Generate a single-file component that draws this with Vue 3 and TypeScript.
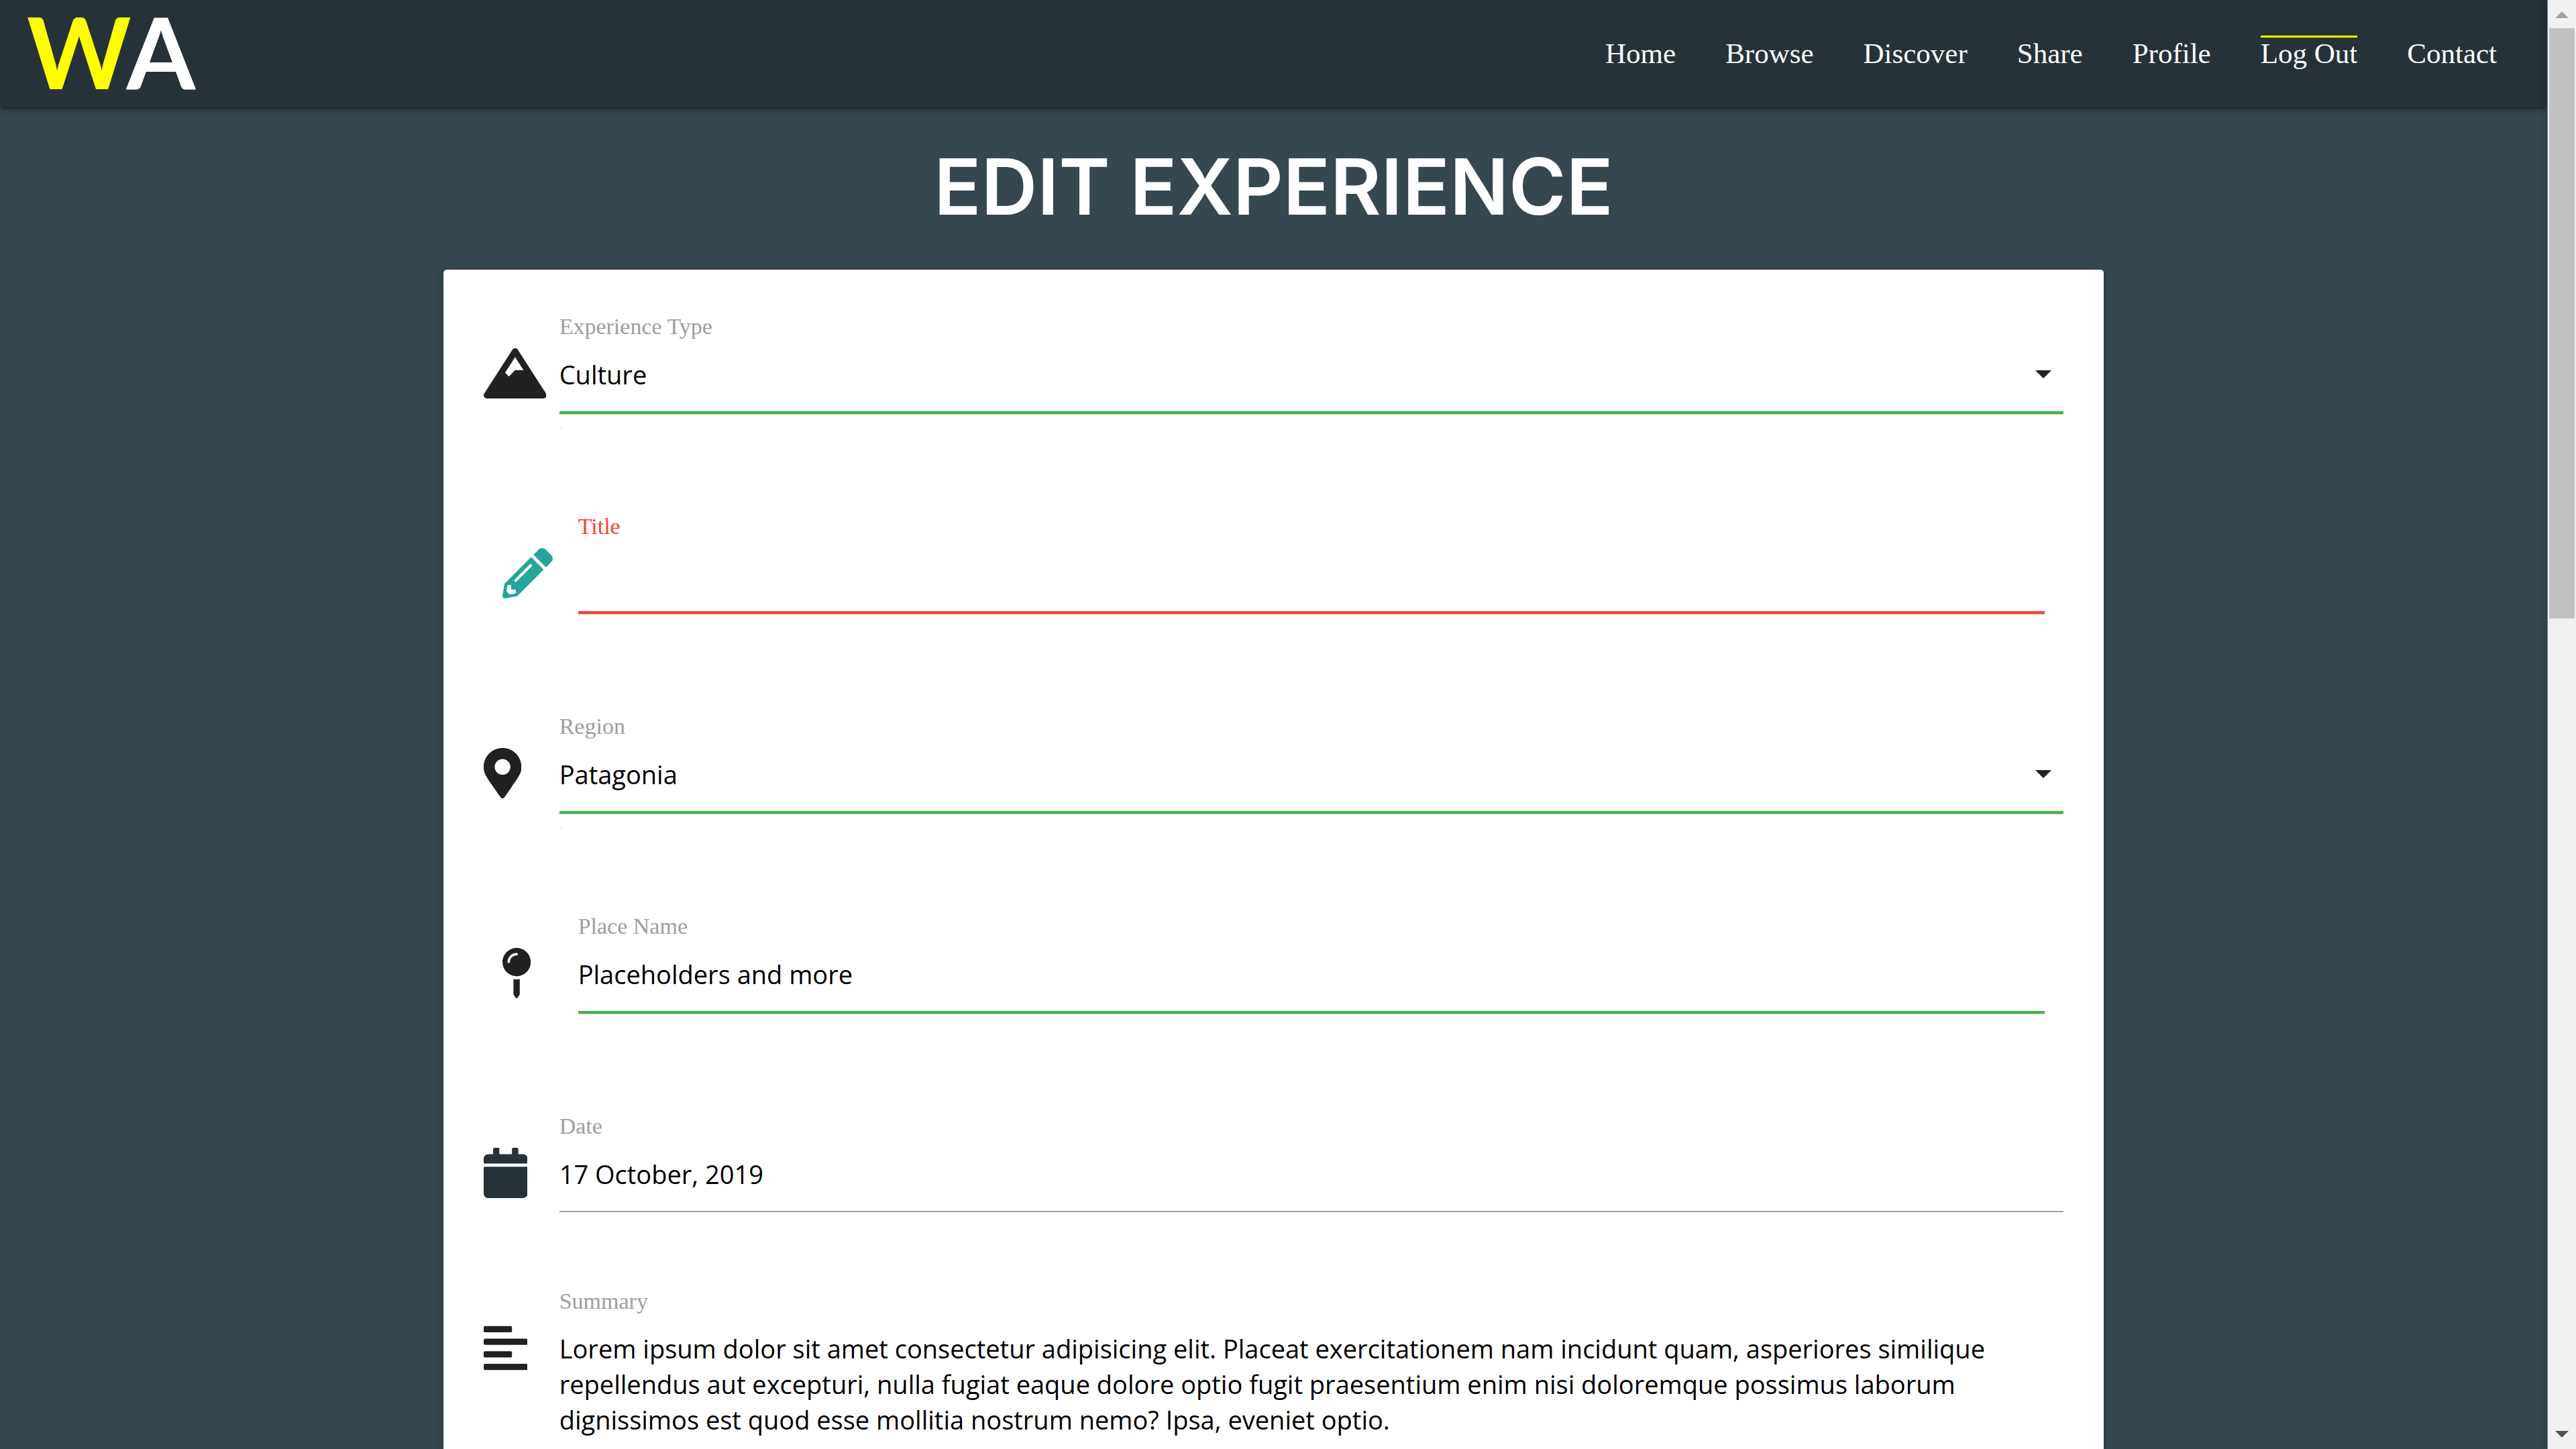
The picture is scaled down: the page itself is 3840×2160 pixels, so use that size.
<script setup lang="ts">
import { ref } from 'vue'

interface NavItem {
  label: string
  active?: boolean
}

type FieldKind = 'select' | 'text' | 'textarea'

interface Field {
  id: string
  label: string
  kind: FieldKind
  state: 'valid' | 'invalid' | 'plain'
  inset?: boolean
  tone?: 'teal' | 'slate'
  iconWidth: number
  icon: string
  options?: string[]
}

const nav: NavItem[] = [
  { label: 'Home' },
  { label: 'Browse' },
  { label: 'Discover' },
  { label: 'Share' },
  { label: 'Profile' },
  { label: 'Log Out', active: true },
  { label: 'Contact' },
]

const fields: Field[] = [
  {
    id: 'type',
    label: 'Experience Type',
    kind: 'select',
    state: 'valid',
    options: ['Culture'],
    iconWidth: 640,
    icon: 'M634.92 462.7l-288-448C341.03 5.54 330.89 0 320 0s-21.03 5.54-26.92 14.7l-288 448a32.001 32.001 0 0 0-1.17 32.64A32.004 32.004 0 0 0 32 512h576c11.71 0 22.48-6.39 28.09-16.67a31.983 31.983 0 0 0-1.17-32.63zM320 91.18L405.39 224H320l-64 64-38.06-38.06L320 91.18z',
  },
  {
    id: 'title',
    label: 'Title',
    kind: 'text',
    state: 'invalid',
    inset: true,
    tone: 'teal',
    iconWidth: 512,
    icon: 'M497.9 142.1l-46.1 46.1c-4.7 4.7-12.3 4.7-17 0l-111-111c-4.7-4.7-4.7-12.3 0-17l46.1-46.1c18.7-18.7 49.1-18.7 67.9 0l60.1 60.1c18.8 18.7 18.8 49.1 0 67.9zM284.2 99.8L21.6 362.4.4 483.9c-2.9 16.4 11.4 30.6 27.8 27.8l121.5-21.3 262.6-262.6c4.7-4.7 4.7-12.3 0-17l-111-111c-4.8-4.7-12.4-4.7-17.1 0zM124.1 339.9c-5.5-5.5-5.5-14.3 0-19.8l154-154c5.5-5.5 14.3-5.5 19.8 0s5.5 14.3 0 19.8l-154 154c-5.5 5.5-14.3 5.5-19.8 0zM88 424h48v36.3l-64.5 11.3-31.1-31.1L51.7 376H88v48z',
  },
  {
    id: 'region',
    label: 'Region',
    kind: 'select',
    state: 'valid',
    options: ['Patagonia'],
    iconWidth: 384,
    icon: 'M172.268 501.67C26.97 291.031 0 269.413 0 192 0 85.961 85.961 0 192 0s192 85.961 192 192c0 77.413-26.97 99.031-172.268 309.67-9.535 13.774-29.93 13.773-39.464 0zM192 272c44.183 0 80-35.817 80-80s-35.817-80-80-80-80 35.817-80 80 35.817 80 80 80z',
  },
  {
    id: 'place',
    label: 'Place Name',
    kind: 'text',
    state: 'valid',
    inset: true,
    iconWidth: 288,
    icon: 'M112 316.94v156.69l22.02 33.02c4.75 7.12 15.22 7.12 19.97 0L176 473.63V316.94c-10.39 1.92-21.06 3.06-32 3.06s-21.61-1.14-32-3.06zM144 0C64.47 0 0 64.47 0 144s64.47 144 144 144 144-64.47 144-144S223.53 0 144 0zm0 76c-37.5 0-68 30.5-68 68 0 6.62-5.38 12-12 12s-12-5.38-12-12c0-50.73 41.28-92 92-92 6.62 0 12 5.38 12 12s-5.38 12-12 12z',
  },
  {
    id: 'date',
    label: 'Date',
    kind: 'text',
    state: 'plain',
    tone: 'slate',
    iconWidth: 448,
    icon: 'M12 192h424c6.6 0 12 5.4 12 12v260c0 26.5-21.5 48-48 48H48c-26.5 0-48-21.5-48-48V204c0-6.6 5.4-12 12-12zm436-44v-36c0-26.5-21.5-48-48-48h-48V12c0-6.6-5.4-12-12-12h-40c-6.6 0-12 5.4-12 12v52H160V12c0-6.6-5.4-12-12-12h-40c-6.6 0-12 5.4-12 12v52H48C21.5 64 0 85.5 0 112v36c0 6.6 5.4 12 12 12h424c6.6 0 12-5.4 12-12z',
  },
  {
    id: 'summary',
    label: 'Summary',
    kind: 'textarea',
    state: 'plain',
    iconWidth: 448,
    icon: 'M12.83 352h262.34A12.82 12.82 0 0 0 288 339.17v-38.34A12.82 12.82 0 0 0 275.17 288H12.83A12.82 12.82 0 0 0 0 300.83v38.34A12.82 12.82 0 0 0 12.83 352zm0-256h262.34A12.82 12.82 0 0 0 288 83.17V44.83A12.82 12.82 0 0 0 275.17 32H12.83A12.82 12.82 0 0 0 0 44.83v38.34A12.82 12.82 0 0 0 12.83 96zM432 160H16a16 16 0 0 0-16 16v32a16 16 0 0 0 16 16h416a16 16 0 0 0 16-16v-32a16 16 0 0 0-16-16zm0 256H16a16 16 0 0 0-16 16v32a16 16 0 0 0 16 16h416a16 16 0 0 0 16-16v-32a16 16 0 0 0-16-16z',
  },
]

const values = ref<Record<string, string>>({
  type: 'Culture',
  title: '',
  region: 'Patagonia',
  place: 'Placeholders and more',
  date: '17 October, 2019',
  summary:
    'Lorem ipsum dolor sit amet consectetur adipisicing elit. Placeat exercitationem nam incidunt quam, asperiores similique repellendus aut excepturi, nulla fugiat eaque dolore optio fugit praesentium enim nisi doloremque possimus laborum dignissimos est quod esse mollitia nostrum nemo? Ipsa, eveniet optio.',
})
</script>

<template>
  <div class="window">
    <div class="page">
      <header class="topbar">
        <a href="#" class="logo"><span class="logo-w">W</span>A</a>
        <nav class="nav">
          <a
            v-for="item in nav"
            :key="item.label"
            href="#"
            class="nav-link"
            :class="{ active: item.active }"
          >{{ item.label }}</a>
        </nav>
      </header>

      <main>
        <h1 class="heading">EDIT EXPERIENCE</h1>
        <form class="card" @submit.prevent>
          <div
            v-for="field in fields"
            :key="field.id"
            class="field"
            :class="[field.state, field.kind, { inset: field.inset }]"
          >
            <div class="icon-cell">
              <svg
                class="icon"
                :class="field.tone"
                :viewBox="`0 0 ${field.iconWidth} 512`"
                aria-hidden="true"
              >
                <path :d="field.icon" />
              </svg>
            </div>
            <div class="body">
              <label class="label" :for="field.id">{{ field.label }}</label>
              <div v-if="field.kind === 'select'" class="select-box">
                <select :id="field.id" v-model="values[field.id]" class="control">
                  <option v-for="option in field.options" :key="option">{{ option }}</option>
                </select>
                <svg class="caret" viewBox="0 0 24 12" aria-hidden="true"><path d="M0 0h24L12 12z" /></svg>
                <span class="dot"></span>
              </div>
              <textarea
                v-else-if="field.kind === 'textarea'"
                :id="field.id"
                v-model="values[field.id]"
                class="area"
                rows="4"
                spellcheck="false"
              ></textarea>
              <input v-else :id="field.id" v-model="values[field.id]" class="control" type="text" />
            </div>
          </div>
        </form>
      </main>
    </div>

    <div class="scrollbar" aria-hidden="true">
      <svg class="arrow up" viewBox="0 0 42 42"><path d="M21 17l10 10H11z" /></svg>
      <div class="track"><div class="thumb"></div></div>
      <svg class="arrow down" viewBox="0 0 42 42"><path d="M21 25L11 15h20z" /></svg>
    </div>
  </div>
</template>

<style>
body {
  margin: 0;
  background: #37474f;
}
</style>

<style scoped>
*,
*::before {
  box-sizing: border-box;
}

.window {
  display: flex;
  height: 100vh;
  overflow: hidden;
  font-family: "Liberation Serif", serif;
}

.page {
  flex: 1;
  min-width: 0;
  overflow: hidden;
  background: #37474f;
}

.topbar {
  display: flex;
  align-items: flex-start;
  justify-content: space-between;
  height: 160px;
  padding: 0 75px 0 40px;
  background: #263238;
  box-shadow: 0 5px 5px 0 rgba(0, 0, 0, 0.14), 0 3px 12px 0 rgba(0, 0, 0, 0.12), 0 5px 3px -3px rgba(0, 0, 0, 0.3);
}

.logo {
  color: #fff;
  font-family: Lato, sans-serif;
  font-size: 148px;
  font-weight: 700;
  line-height: 152px;
  text-decoration: none;
}

.logo-w {
  color: #ff0;
}

.nav {
  display: flex;
  gap: 74px;
}

.nav-link {
  position: relative;
  color: #fff;
  font-size: 43px;
  line-height: 160px;
  text-decoration: none;
}

.nav-link.active::before {
  content: "";
  position: absolute;
  top: 53px;
  left: 0;
  width: 100%;
  height: 3px;
  background: #ff0;
}

.heading {
  margin: 0 0 6px;
  color: #fff;
  font-family: Inter, sans-serif;
  font-size: 116px;
  font-weight: 600;
  line-height: 236px;
  text-align: center;
}

.card {
  width: 65.2%;
  margin: 0 auto;
  padding: 65px 60px;
  border-radius: 5px;
  background: #fff;
  box-shadow: 0 5px 5px 0 rgba(0, 0, 0, 0.14), 0 8px 12px -5px rgba(0, 0, 0, 0.12), 0 3px 12px 0 rgba(0, 0, 0, 0.2);
}

.field {
  display: flex;
  margin-bottom: 150px;
}

.field.inset {
  padding: 0 28px;
}

.field.plain {
  margin-bottom: 113px;
}

.icon-cell {
  flex: none;
  width: 113px;
  padding-top: 52px;
}

.icon {
  display: block;
  height: 75px;
  fill: #212121;
}

.icon.teal {
  fill: #26a69a;
}

.icon.slate {
  fill: #263238;
}

.body {
  flex: 1;
  min-width: 0;
}

.label {
  display: block;
  color: #9e9e9e;
  font-size: 34px;
  line-height: 40px;
}

.invalid .label {
  color: #f44336;
}

.control,
.area {
  display: block;
  width: 100%;
  margin: 0;
  border: 0;
  border-radius: 0;
  outline: none;
  background: transparent;
  color: #000;
  font-family: "Open Sans", sans-serif;
  font-size: 38px;
  appearance: none;
}

.control {
  height: 108px;
  padding: 0 0 4px;
  border-bottom: 2px solid #9e9e9e;
}

.valid .control {
  border-color: #4caf50;
  box-shadow: 0 2px 0 #4caf50, 0 3px 0 #a5d7a7;
}

.invalid .control {
  border-color: #f44336;
  box-shadow: 0 2px 0 #f44336, 0 3px 0 #faa19b;
}

.area {
  padding: 24px 0 0;
  line-height: 53px;
  resize: none;
  overflow: hidden;
}

.select-box {
  position: relative;
}

.caret {
  position: absolute;
  top: 45px;
  right: 18px;
  width: 24px;
  height: 12px;
  fill: #212121;
  pointer-events: none;
}

.dot {
  position: absolute;
  top: 128px;
  left: 0;
  width: 5px;
  height: 5px;
  border: 2px solid #efefef;
  border-radius: 2px;
}

.scrollbar {
  position: relative;
  display: flex;
  flex: none;
  flex-direction: column;
  width: 43px;
  border-left: 1px solid #737e83;
  background: #f1f1f1;
  box-shadow: 0 0 12px rgba(0, 0, 0, 0.25);
}

.arrow {
  flex: none;
  width: 42px;
  height: 42px;
}

.up {
  fill: #a3a3a3;
}

.down {
  fill: #505050;
}

.track {
  flex: 1;
  padding: 0 2px;
}

.thumb {
  height: 42.4%;
  background: #c1c1c1;
}
</style>
